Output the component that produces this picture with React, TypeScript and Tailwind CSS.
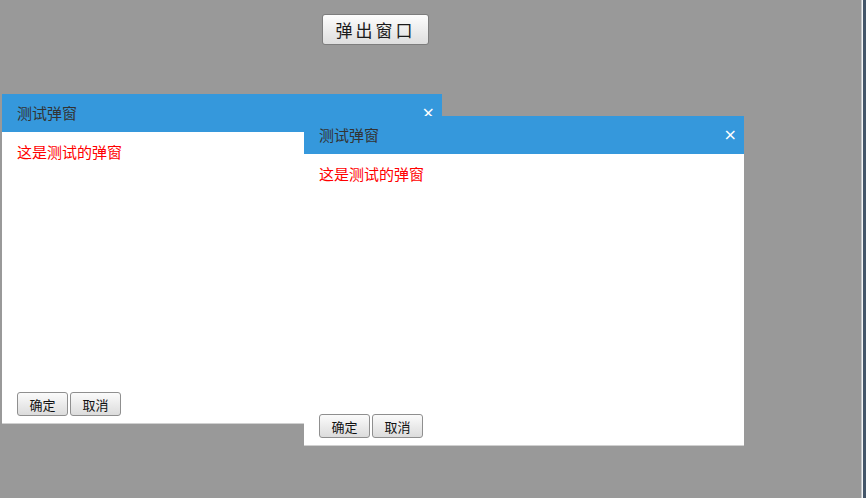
import React from "react";

const font = { fontFamily: '"Noto Sans CJK SC", "Noto Sans", sans-serif' };

function SmallBtn({ children }: { children: React.ReactNode }) {
  return (
    <button
      className="h-[24px] w-[51px] rounded-[3px] border border-[#8f8f8f] bg-gradient-to-b from-[#fbfbfb] to-[#dcdcdc] text-[13px] leading-none text-[#111]"
      style={font}
    >
      {children}
    </button>
  );
}

function Dialog({ left, top }: { left: number; top: number }) {
  return (
    <div
      className="absolute flex h-[330px] w-[440px] flex-col bg-white border-b border-[#d0d0d0]"
      style={{ left, top }}
    >
      <div className="flex h-[38px] items-center justify-between bg-[#3598dc] pl-[15px] pr-[7px]">
        <span className="text-[15px] text-[#333333]" style={font}>测试弹窗</span>
        <span className="text-[16px] leading-none text-white" style={{ fontFamily: '"DejaVu Sans", sans-serif' }}>×</span>
      </div>
      <div className="flex flex-1 flex-col px-[15px] pt-[9px] pb-[7px]">
        <p className="text-[15px] leading-[22px] text-[#ff0000]" style={font}>这是测试的弹窗</p>
        <div className="mt-auto flex gap-[2px]">
          <SmallBtn>确定</SmallBtn>
          <SmallBtn>取消</SmallBtn>
        </div>
      </div>
    </div>
  );
}

export default function App() {
  return (
    <div className="flex h-[498px] w-[866px] overflow-hidden">
      <div className="relative flex-1 bg-[#999999]">
        <div className="pl-[322px] pt-[14px]">
          <button
            className="h-[31px] w-[107px] rounded-[3px] border border-[#7d7d7d] bg-gradient-to-b from-[#fdfdfd] to-[#dedede] text-[17px] tracking-[3px] text-[#1a1a1a]"
            style={font}
          >
            弹出窗口
          </button>
        </div>
        <Dialog left={2} top={94} />
        <Dialog left={304} top={116} />
      </div>
      <div className="w-px bg-[#c4c8cc]" />
      <div className="w-px bg-[#f4f4f4]" />
      <div className="w-[3px] bg-[#44566a]" />
    </div>
  );
}
